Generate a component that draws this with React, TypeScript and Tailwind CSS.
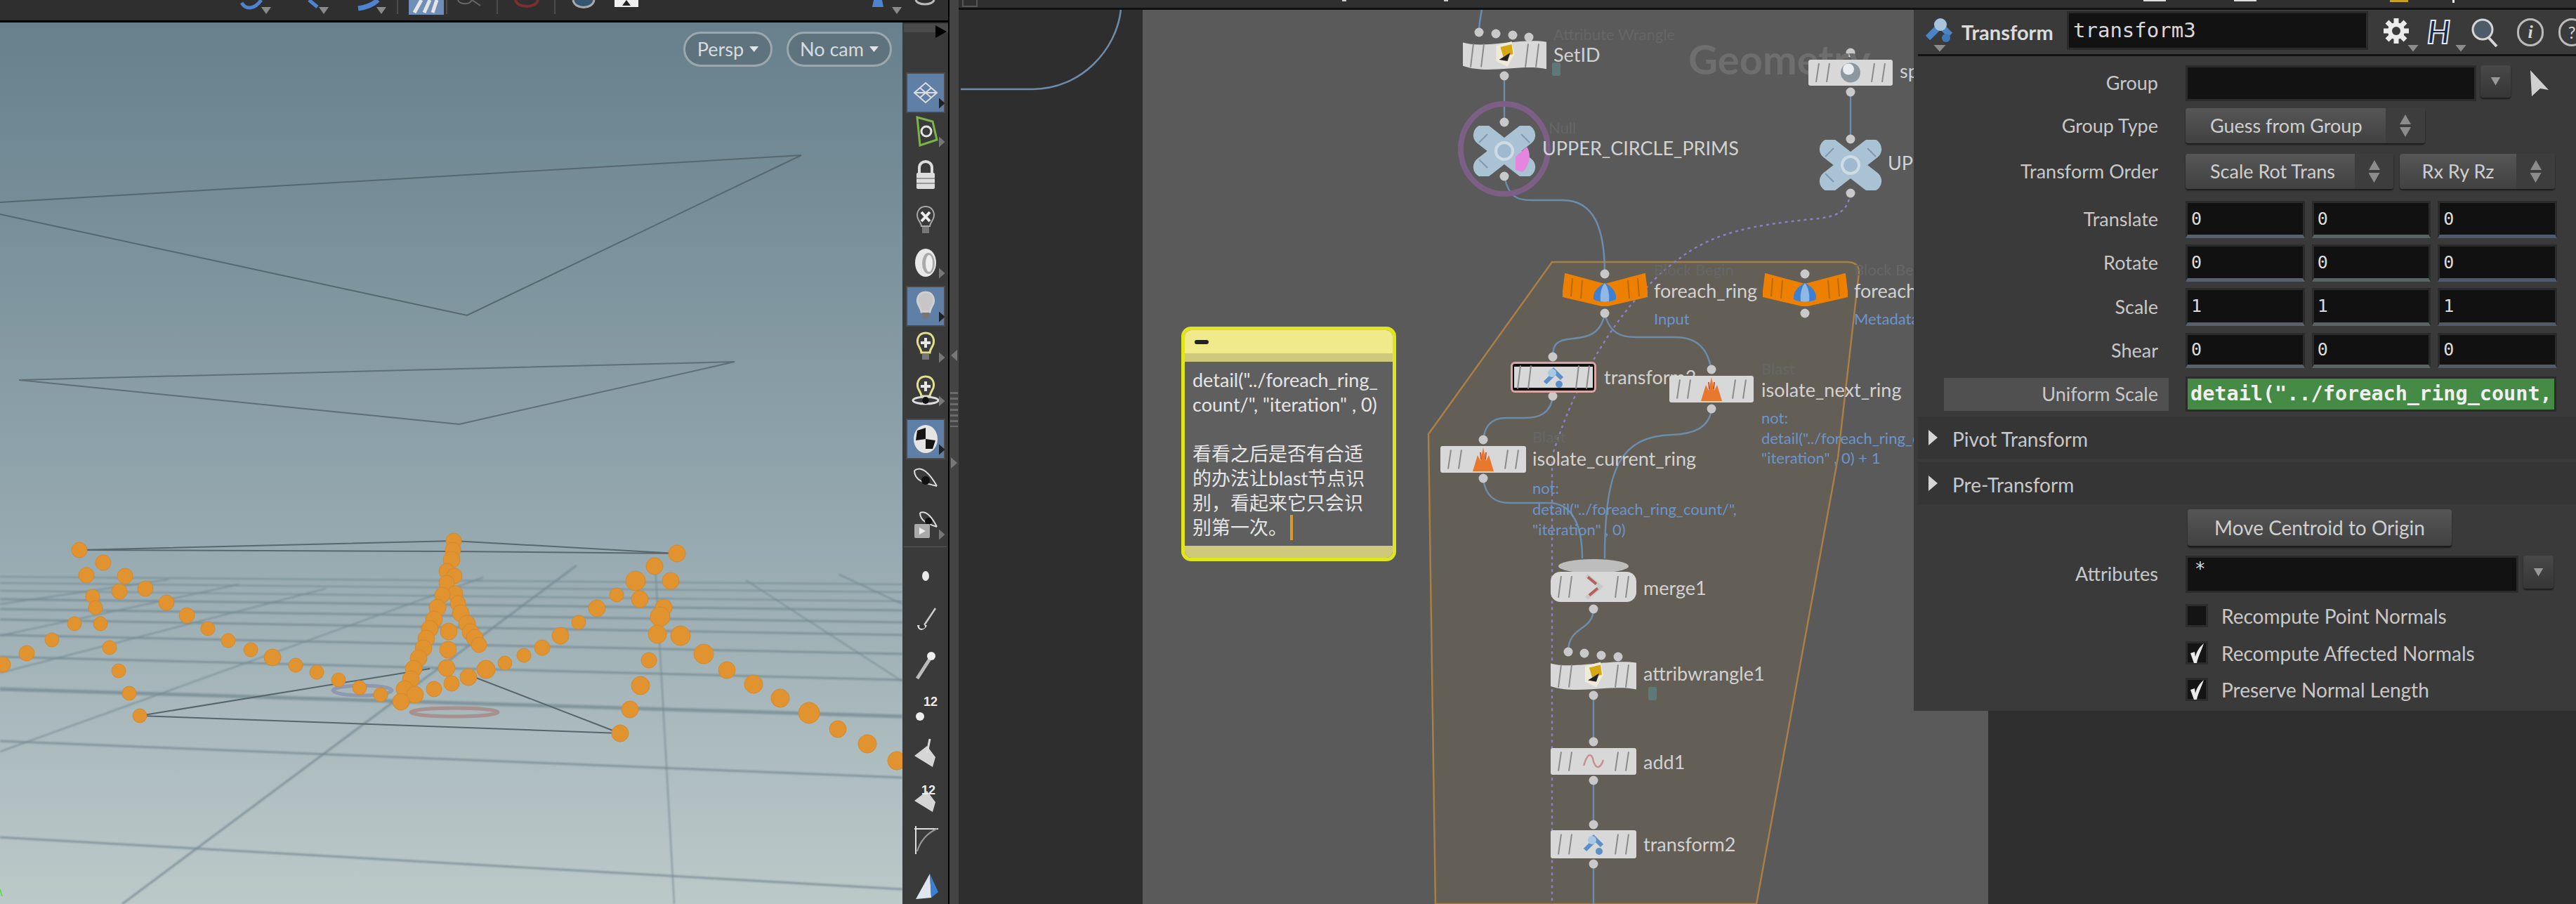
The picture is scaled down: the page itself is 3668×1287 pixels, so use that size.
import type { ReactNode } from "react";

const SANS = "font-['Lato','Noto_Sans_CJK_SC',sans-serif]";
const MONO = "font-['DejaVu_Sans_Mono',monospace]";
const OX = 1365; // right pane starts here, node data is in page coordinates

// viewport scatter, [x, y, r]
const dots: number[][] = [
  [113, 783, 11], [147, 801, 11], [123, 819, 11], [178, 820, 11], [207, 838, 11], [170, 842, 11], [132, 849, 10], [136, 865, 10],
  [237, 858, 11], [266, 876, 11], [106, 888, 10], [143, 888, 10], [296, 895, 10], [74, 911, 10], [325, 912, 10], [156, 922, 10],
  [357, 925, 10], [38, 930, 11], [388, 936, 12], [4, 946, 11], [421, 947, 10], [169, 955, 10], [451, 957, 10], [482, 968, 10],
  [184, 987, 10], [512, 979, 10], [542, 989, 10], [199, 1019, 10],
  [646, 770, 11], [645, 783, 11], [643, 797, 12], [636, 813, 11], [647, 820, 11], [636, 830, 11], [648, 845, 11], [630, 847, 11],
  [652, 859, 11], [623, 865, 12], [656, 873, 12], [618, 882, 12], [665, 888, 12], [612, 895, 12], [639, 899, 12], [670, 900, 12],
  [607, 909, 12], [676, 908, 12], [603, 923, 12], [682, 918, 11], [638, 925, 12], [596, 937, 12], [589, 952, 12], [636, 951, 12],
  [585, 967, 12], [576, 981, 12], [591, 989, 12], [571, 999, 12],
  [618, 981, 11], [643, 973, 11], [667, 964, 12], [692, 953, 13], [719, 944, 10], [746, 933, 10], [772, 922, 11], [798, 905, 12],
  [824, 886, 10], [850, 866, 12], [878, 847, 10], [905, 827, 14], [932, 806, 12], [964, 788, 12], [955, 827, 12], [911, 853, 12],
  [945, 865, 12], [940, 878, 14], [936, 903, 13], [969, 905, 14], [1002, 931, 14], [924, 940, 11], [1035, 954, 12], [912, 976, 13],
  [1073, 974, 13], [1111, 994, 13], [897, 1010, 12], [1152, 1015, 15], [883, 1044, 12], [1193, 1038, 12], [1235, 1059, 13], [1277, 1083, 13],
];

const groundLines: number[][] = [
  [0, 1192, 1285, 1266, 3], [0, 1055, 1285, 1107, 3], [0, 981, 1285, 1020, 5], [0, 935, 1285, 968, 3], [0, 904, 1285, 931, 3],
  [0, 882, 1285, 904, 3], [0, 867, 1285, 886, 3], [0, 853, 1285, 869, 3], [0, 841, 1285, 856, 2], [0, 830, 1285, 843, 2], [0, 821, 1285, 832, 2],
  [174, 1287, 821, 805, 3], [0, 1070, 688, 822, 2], [0, 958, 464, 838, 2], [0, 905, 340, 832, 2], [0, 860, 240, 825, 2],
  [960, 1287, 933, 805, 2], [1285, 970, 1062, 826, 2], [1285, 860, 1195, 818, 2],
];

function Triangle({ className }: { className: string }) {
  return <span className={`inline-block [clip-path:polygon(0_0,100%_0,50%_100%)] ${className}`} />;
}

function Viewport() {
  return (
    <div className="relative h-[1255px] w-[1285px] overflow-hidden bg-gradient-to-b from-[#67808c] via-[#8fa3ab] to-[#bcc9c9]">
      <svg className="absolute inset-0" width="1285" height="1255" viewBox="0 32 1285 1255" fill="none">
        <g className="blur-[0.8px]">
          {groundLines.map((l, i) => (
            <line key={i} x1={l[0]} y1={l[1]} x2={l[2]} y2={l[3]} stroke="#718690" strokeWidth={l[4]} opacity="0.7" />
          ))}
        </g>
        <path d="M0 288 L1141 221 L665 449 L0 305" stroke="#56686f" strokeWidth="2" />
        <path d="M27 541 L1046 515 L654 604 Z" stroke="#5f6f76" strokeWidth="2" />
        <path d="M113 783 L646 770 L964 788 L646 785 Z" stroke="#59686e" strokeWidth="2" />
        <path d="M199 1019 L612 952 M199 1019 L883 1044 L678 965" stroke="#56656b" strokeWidth="2" />
        <ellipse cx="516" cy="983" rx="42" ry="7" stroke="#8f98ac" strokeWidth="5" />
        <ellipse cx="647" cy="1014" rx="62" ry="6" stroke="#a8908f" strokeWidth="5" />
        {dots.map((d, i) => (
          <circle key={i} cx={d[0]} cy={d[1]} r={d[2]} fill="#e0932f" stroke="#d08a32" />
        ))}
        <path d="M0 1266 L3 1276" stroke="#5fdc4f" strokeWidth="2" />
      </svg>
      <div className={`absolute right-[15px] top-[13px] flex gap-[20px] text-[27px] text-[#d5dcdf] ${SANS}`}>
        <div className="flex h-[50px] w-[127px] items-center justify-center gap-2 rounded-full border-[3px] border-[#9ba8ae] bg-[#5f737e]">
          Persp <Triangle className="h-[8px] w-[13px] bg-[#e2e6e8]" />
        </div>
        <div className="flex h-[50px] w-[150px] items-center justify-center gap-2 rounded-full border-[3px] border-[#9ba8ae] bg-[#5f737e]">
          No cam <Triangle className="h-[8px] w-[13px] bg-[#e2e6e8]" />
        </div>
      </div>
    </div>
  );
}

function Bulb({ color = "#cfcfcf", dark, cross }: { color?: string; dark?: boolean; cross?: boolean }) {
  return (
    <>
      <path d="M20 4 C30 4 33 13 31 20 C29 25 26 28 26 32 L14 32 C14 28 11 25 9 20 C7 13 10 4 20 4 Z" fill={dark ? "#3d3d3d" : "#c6c6c6"} stroke={color} strokeWidth="3" />
      <rect x="15" y="33" width="10" height="9" fill="#777" />
      {cross && <path d="M20 11 V25 M13 18 H27" stroke={dark ? "#e8e8e8" : "#222"} strokeWidth="4" />}
    </>
  );
}

const toolIcons: ReactNode[] = [
  <path key="a" d="M20 10 L36 24 L20 38 L4 24 Z M12 17 L28 31 M28 17 L12 31 M4 24 H36" stroke="#ddd" strokeWidth="2" fill="none" />,
  <g key="b" fill="none"><path d="M8 4 L30 10 L36 36 L12 44 Z" stroke="#7ab548" strokeWidth="3" /><circle cx="21" cy="24" r="7" stroke="#e5e5e5" strokeWidth="3" /></g>,
  <g key="c"><path d="M11 22 V14 C11 2 29 2 29 14 V22" stroke="#ddd" strokeWidth="4" fill="none" /><rect x="7" y="21" width="26" height="23" rx="2" fill="#ddd" /><path d="M7 29 H33 M7 36 H33" stroke="#999" strokeWidth="2" /></g>,
  <g key="d"><path d="M20 4 C30 4 34 14 31 21 C29 26 26 28 26 32 L14 32 C14 28 11 26 9 21 C6 14 10 4 20 4 Z" fill="#3a3a3a" stroke="#aaa" strokeWidth="2" /><path d="M14 12 L26 25 M26 12 L14 25" stroke="#eee" strokeWidth="4" /><rect x="15" y="33" width="10" height="9" fill="#777" /></g>,
  <g key="e"><ellipse cx="20" cy="24" rx="15" ry="20" fill="#e8e8e8" /><ellipse cx="24" cy="25" rx="9" ry="15" fill="#aaa" /><ellipse cx="25" cy="25" rx="5" ry="12" fill="#eee" /></g>,
  <Bulb key="f" />,
  <Bulb key="g" color="#e3e08a" dark cross />,
  <g key="h"><Bulb color="#e3e08a" dark cross /><ellipse cx="20" cy="38" rx="18" ry="5" fill="none" stroke="#ddd" strokeWidth="3" /><circle cx="20" cy="38" r="5" fill="#111" /></g>,
  <g key="i"><ellipse cx="20" cy="24" rx="17" ry="20" fill="#e5e5e5" /><path d="M8 12 L20 8 L20 24 L6 26 Z M20 24 L34 26 L30 38 L20 38 Z" fill="#151515" /></g>,
  <g key="j" fill="none"><path d="M4 12 C14 4 26 16 36 34" stroke="#ddd" strokeWidth="2" /><path d="M4 12 C4 26 18 30 36 34" stroke="#ddd" strokeWidth="2" /><circle cx="20" cy="26" r="6" fill="#111" /></g>,
  <g key="k" fill="none"><path d="M12 8 C22 4 30 16 36 28 M12 8 C12 20 24 24 36 28" stroke="#ddd" strokeWidth="2" /><circle cx="24" cy="20" r="5" fill="#111" /><rect x="4" y="24" width="22" height="20" rx="2" fill="#aaa" /><path d="M11 29 L20 34 L11 39 Z" fill="#eee" /></g>,
];

const toolIcons2: ReactNode[] = [
  <ellipse key="a" cx="20" cy="24" rx="5" ry="7" fill="#e8e8e8" />,
  <g key="b"><path d="M34 6 L18 30" stroke="#ccc" strokeWidth="2.5" /><path d="M8 30 C10 42 20 36 22 30" fill="#ddd" /><ellipse cx="15" cy="32" rx="4" ry="3" fill="#333" /></g>,
  <g key="c"><path d="M8 44 L26 16" stroke="#bbb" strokeWidth="5" /><circle cx="28" cy="12" r="6" fill="#eee" /></g>,
  <g key="d"><circle cx="12" cy="36" r="6" fill="#eee" /><text x="17" y="21" fontSize="18" fontWeight="700" fill="#eee" fontFamily="Liberation Sans">12</text></g>,
  <g key="e"><path d="M4 28 L22 14 L34 30 L30 44 Z" fill="#d5d5d5" /><path d="M26 4 L22 24" stroke="#ddd" strokeWidth="3" /></g>,
  <g key="f"><path d="M4 28 L22 14 L34 30 L30 44 Z" fill="#d5d5d5" /><text x="14" y="19" fontSize="18" fontWeight="700" fill="#eee" fontFamily="Liberation Sans">12</text></g>,
  <g key="g" fill="none" stroke="#ddd" strokeWidth="2"><path d="M6 4 V44 M4 8 H38" /><path d="M8 40 C12 26 22 14 36 8" stroke="#999" /></g>,
  <g key="h"><path d="M6 44 L26 8 L28 42 Z" fill="#dfe6ee" /><path d="M26 8 L38 34 L28 42 Z" fill="#3d7fd0" /></g>,
];

const toolMargins = ["mt-0", "mt-[1px]", "mt-[8px]", "mt-[11px]", "mt-[6px]", "mt-[8px]", "mt-[4px]", "mt-[8px]", "mt-[15px]", "mt-[3px]", "mt-[10px]"];
const toolMargins2 = ["mt-[14px]", "mt-[10px]", "mt-[8px]", "mt-[8px]", "mt-[10px]", "mt-[10px]", "mt-[6px]", "mt-[10px]"];
const active = [0, 5, 8];
const hasMenu = [0, 1, 4, 5, 6, 7, 8, 10];

function ToolCell({ icon, className, on, more }: { icon: ReactNode; className: string; on?: boolean; more?: boolean }) {
  return (
    <div className={`relative flex h-[54px] w-[52px] shrink-0 items-center justify-center self-center ${on ? "bg-[#5f7fa6] outline outline-[2px] outline-[#4b4b4b]" : ""} ${className}`}>
      <svg width="40" height="48" viewBox="0 0 40 48">{icon}</svg>
      {more && <span className={`absolute -right-[2px] bottom-[4px] h-[16px] w-[9px] [clip-path:polygon(0_0,100%_50%,0_100%)] ${on ? "bg-[#222]" : "bg-[#777]"}`} />}
    </div>
  );
}

function Toolbar() {
  return (
    <div className="flex h-[1255px] w-[65px] flex-col overflow-hidden bg-[#3a3a3a]">
      <div className="relative ml-[2px] mt-[2px] mb-[59px] h-[22px] bg-[#4a4a4a]">
        <span className="absolute right-[2px] top-[2px] h-[18px] w-[16px] bg-black [clip-path:polygon(0_0,100%_50%,0_100%)]" />
      </div>
      {toolIcons.map((ic, i) => (
        <ToolCell key={i} icon={ic} className={toolMargins[i]} on={active.includes(i)} more={hasMenu.includes(i)} />
      ))}
      <div className="mx-[2px] mt-[5px] h-px shrink-0 bg-[#5a5a5a]" />
      {toolIcons2.map((ic, i) => (
        <ToolCell key={i} icon={ic} className={toolMargins2[i]} />
      ))}
    </div>
  );
}

function LeftTopBar() {
  return (
    <div className="h-[32px] border-b-[3px] border-black bg-[#2f2f2f]">
      <svg width="1350" height="29" viewBox="0 0 1350 29">
        <path d="M344 4 C350 14 362 14 372 0 M440 0 L452 10" stroke="#4f83cf" strokeWidth="5" fill="none" />
        <path d="M510 12 C524 10 532 6 538 0" stroke="#4f83cf" strokeWidth="7" fill="none" />
        <path d="M372 10 H386 L379 20 Z M454 10 H468 L461 20 Z M536 10 H550 L543 20 Z M1270 10 H1284 L1277 20 Z" fill="#8a8a8a" />
        <rect x="582" y="0" width="50" height="21" fill="#6f8fb8" />
        <path d="M590 18 L600 0 M604 18 L612 0 M616 18 L622 0" stroke="#e5e5e5" strokeWidth="5" />
        <path d="M566 0 V20 M636 0 V20 M708 0 V20 M790 0 V20" stroke="#4c4c4c" strokeWidth="2" />
        <path d="M652 0 C654 6 668 8 672 0 L684 8" stroke="#666" strokeWidth="2" fill="none" />
        <path d="M734 0 C736 12 764 12 766 0" stroke="#7b2f2f" strokeWidth="4" fill="none" />
        <path d="M816 0 C818 14 844 14 846 0" stroke="#aaa" fill="#35566e" strokeWidth="3" />
        <rect x="875" y="0" width="34" height="10" fill="#f0f0f0" />
        <path d="M886 8 L892 0 L898 8" fill="#222" />
        <path d="M1244 0 H1256 L1258 10 H1242 Z" fill="#4f83cf" />
        <path d="M1304 0 C1306 8 1328 8 1330 0" stroke="#bbb" strokeWidth="3" fill="none" />
      </svg>
    </div>
  );
}

function Stripes({ w, h, color = "#8a8a8a" }: { w: number; h: number; color?: string }) {
  const xs = [13, 28, w - 28, w - 13];
  return (
    <>
      {xs.map((x, i) => (
        <path key={i} d={`M${x + 2} ${h * 0.14} L${x - 2} ${h * 0.86}`} stroke={color} strokeWidth="2" />
      ))}
    </>
  );
}

function NodeIcon({ kind, cx, cy }: { kind: string; cx: number; cy: number }) {
  return (
    <g transform={`translate(${cx} ${cy})`}>
      {kind === "wrangle" && (
        <>
          <path d="M-12 -14 L10 -20 L14 -2 L4 16 L-12 8 Z" fill="#f0ead8" />
          <path d="M-6 -12 L10 -16 L12 -2 L-2 2 Z" fill="#d6a911" />
          <path d="M-8 6 L8 -4 L4 8 Z" fill="#222" />
        </>
      )}
      {kind === "transform" && (
        <>
          <path d="M-12 8 L2 -6 M-2 -12 L12 2" stroke="#5a8fc8" strokeWidth="6" />
          <circle cx="-2" cy="-6" r="6" fill="#a8c8e4" />
          <circle cx="8" cy="10" r="5" fill="#5a8fc8" />
        </>
      )}
      {kind === "blast" && (
        <>
          <path d="M-15 17 L-8 -6 L-4 2 L0 -17 L4 2 L8 -6 L15 17 Z" fill="#e8792c" />
          <path d="M-4 -10 L-3 0 M4 -10 L3 0" stroke="#c9552a" strokeWidth="2" />
        </>
      )}
      {kind === "merge" && (
        <>
          <path d="M-10 -16 L10 0 L-10 16" stroke="#c9c9c9" strokeWidth="6" fill="none" />
          <path d="M-8 -14 L4 -4 M-6 12 L6 2" stroke="#b5605a" strokeWidth="4" />
        </>
      )}
      {kind === "add" && <path d="M-14 6 C-8 -14 -2 -12 0 0 C4 12 10 10 14 -2" stroke="#c89090" strokeWidth="2.5" fill="none" />}
      {kind === "sphere" && (
        <>
          <circle r="14" fill="#8c979f" />
          <circle cx="-3" cy="-5" r="8" fill="#e8edf0" />
        </>
      )}
    </g>
  );
}

type NodeData = { x: number; y: number; w: number; h: number; kind: string; shape?: string; selected?: boolean };

const nodes: NodeData[] = [
  { x: 2083, y: 56, w: 119, h: 46, kind: "wrangle", shape: "wave" },
  { x: 2575, y: 85, w: 120, h: 37, kind: "sphere" },
  { x: 2150, y: 514, w: 124, h: 46, kind: "transform", selected: true },
  { x: 2377, y: 535, w: 120, h: 38, kind: "blast" },
  { x: 2051, y: 635, w: 122, h: 38, kind: "blast" },
  { x: 2208, y: 814, w: 122, h: 43, kind: "merge", shape: "round" },
  { x: 2208, y: 940, w: 122, h: 45, kind: "wrangle", shape: "wave" },
  { x: 2208, y: 1065, w: 122, h: 38, kind: "add" },
  { x: 2208, y: 1182, w: 122, h: 40, kind: "transform" },
];

function BoxNode({ n }: { n: NodeData }) {
  const { w, h } = n;
  return (
    <svg className="absolute" width={w} height={h} style={{ left: n.x - OX, top: n.y }} viewBox={`0 0 ${w} ${h}`}>
      {n.shape === "wave" ? (
        <path d={`M0 ${h * 0.1} C${w * 0.25} ${h * 0.3} ${w * 0.7} ${-h * 0.05} ${w} ${h * 0.08} V${h * 0.92} C${w * 0.7} ${h * 0.75} ${w * 0.3} ${h * 1.1} 0 ${h * 0.82} Z`} fill="#d8d8d8" />
      ) : n.selected ? (
        <>
          <rect x="1" y="1" width={w - 2} height={h - 2} rx="6" fill="#d9a6a6" />
          <rect x="4" y="4" width={w - 8} height={h - 8} rx="3" fill="#111" />
          <rect x="6" y="8" width={w - 12} height={h - 16} fill="#d8d8d8" />
        </>
      ) : (
        <rect width={w} height={h} rx={n.shape === "round" ? 14 : 3} fill="#d8d8d8" />
      )}
      <Stripes w={w} h={h} />
      <NodeIcon kind={n.kind} cx={w / 2} cy={h / 2} />
    </svg>
  );
}

function BlockNode({ x }: { x: number }) {
  return (
    <svg className="absolute" width="121" height="47" style={{ left: x - OX, top: 389 }} viewBox="0 0 121 47">
      <path d="M4 1 L60 16 L117 1 L121 33 L60 47 L0 33 Z" fill="#ee8000" stroke="#ee8000" strokeLinejoin="round" strokeWidth="2" />
      <path d="M14 7 L12 33 M28 10 L26 36 M93 10 L95 36 M107 7 L109 33" stroke="#b96a0a" strokeWidth="2" />
      <path d="M60 14 C72 20 77 28 76 37 C68 42 52 42 44 37 C43 28 48 20 60 14 Z" fill="#3d7fd0" />
      <path d="M60 14 C65 20 67 30 66 40 C62 41 58 41 54 40 C53 30 55 20 60 14 Z" fill="#8fb8e6" />
    </svg>
  );
}

function NullNode({ cx, cy, pink }: { cx: number; cy: number; pink?: boolean }) {
  return (
    <svg className="absolute" width="90" height="72" style={{ left: cx - 45 - OX, top: cy - 36 }} viewBox="-45 -36 90 72">
      <g fill="#a9c2d4">
        <rect x="-52" y="-15" width="104" height="30" rx="15" transform="rotate(38)" />
        <rect x="-52" y="-15" width="104" height="30" rx="15" transform="rotate(-38)" />
      </g>
      <path d="M-36 -12 L-24 -24 M-24 24 L-36 12 M36 -12 L24 -24" stroke="#7f99ad" strokeWidth="2" />
      {pink && <path d="M16 8 L32 -6 C39 4 36 20 26 30 L16 27 Z" fill="#e585de" />}
      <circle r="12" fill="#9dbad0" stroke="#cfdbe3" strokeWidth="4" />
    </svg>
  );
}

function Label({ x, y, children, tone = "main" }: { x: number; y: number; children: ReactNode; tone?: "main" | "faint" | "blue" }) {
  const toneClass =
    tone === "main" ? "text-[27px] text-[#d2d2d2]" : tone === "faint" ? "text-[22px] text-[#666]" : "text-[22px] text-[#6b95cc]";
  return (
    <div className={`absolute -translate-y-1/2 whitespace-nowrap leading-none ${toneClass}`} style={{ left: x - OX, top: y }}>
      {children}
    </div>
  );
}

const inputDots = [
  [2142, 108], [2106, 46], [2130, 48], [2154, 50], [2177, 53], [2635, 75], [2635, 131], [2142, 174], [2142, 251], [2635, 198], [2635, 275],
  [2285, 390], [2285, 446], [2570, 390], [2570, 446], [2211, 508], [2211, 564], [2437, 526], [2437, 582], [2112, 626], [2112, 681],
  [2269, 867], [2233, 928], [2256, 930], [2280, 933], [2304, 935], [2269, 990], [2269, 1056], [2269, 1111], [2269, 1174], [2269, 1230],
];

const wires = [
  "M1368 127 L1470 127 C1540 127 1590 70 1596 14",
  "M2106 46 C2106 34 2108 24 2110 14",
  "M2142 108 V174",
  "M2635 131 V198",
  "M2142 251 C2148 280 2160 285 2180 285 L2225 285 C2270 285 2285 325 2285 390",
  "M2285 446 C2280 475 2262 480 2240 482 C2216 484 2211 490 2211 508",
  "M2285 446 C2292 476 2310 480 2330 480 L2385 480 C2420 480 2432 500 2437 526",
  "M2211 564 C2208 590 2190 595 2170 595 L2145 595 C2120 595 2114 610 2112 626",
  "M2112 681 C2115 708 2130 716 2150 716 L2205 716 C2240 716 2253 750 2253 795",
  "M2437 582 C2434 610 2410 618 2380 619 C2310 622 2285 660 2285 795",
  "M2269 867 C2268 900 2233 890 2233 928",
  "M2269 990 V1056",
  "M2269 1111 V1174",
  "M2269 1230 V1287",
];

function Network() {
  return (
    <>
      <svg className="absolute left-0 top-[0px]" width="2303" height="1287" viewBox={`${OX} 0 2303 1287`} fill="none">
        <path d="M2210 373 L2630 373 Q2647 373 2647 388 L2617 652 L2501 1287 L2044 1287 L2034 618 Z" fill="#635e56" stroke="#a97f45" strokeWidth="2.5" />
        {wires.map((d) => (
          <path key={d} d={d} stroke="#6c8cab" strokeWidth="2.5" />
        ))}
        <path d="M2635 275 C2630 305 2612 309 2580 312 C2500 320 2440 330 2390 369 C2320 420 2250 520 2210 650 V1287" stroke="#8a7fc0" strokeWidth="2.5" strokeDasharray="4 5" />
        <ellipse cx="2142" cy="212" rx="62" ry="64" stroke="#7d5f85" strokeWidth="8" />
        <ellipse cx="2269" cy="806" rx="50" ry="10" fill="#bdbdbd" />
        {inputDots.map((d) => (
          <circle key={`${d[0]}-${d[1]}`} cx={d[0]} cy={d[1]} r="6.5" fill="#c9c9c9" />
        ))}
        <rect x="2347" y="978" width="12" height="19" rx="2" fill="#5f7878" />
        <rect x="2210" y="89" width="12" height="19" rx="2" fill="#5f7878" />
      </svg>

      <div className="absolute left-[1039px] top-[55px] text-[58px] font-bold leading-none text-[#6e6e6e]">Geometry</div>

      <Label x={2212} y={49} tone="faint">Attribute Wrangle</Label>
      <Label x={2212} y={77}>SetID</Label>
      <Label x={2705} y={100}>sphere1</Label>
      <Label x={2205} y={182} tone="faint">Null</Label>
      <Label x={2196} y={210}>UPPER_CIRCLE_PRIMS</Label>
      <Label x={2688} y={231}>UPPER</Label>
      <Label x={2355} y={384} tone="faint">Block Begin</Label>
      <Label x={2640} y={384} tone="faint">Block Begin</Label>
      <Label x={2355} y={413}>foreach_ring</Label>
      <Label x={2640} y={413}>foreach_ring</Label>
      <Label x={2355} y={454} tone="blue">Input</Label>
      <Label x={2640} y={454} tone="blue">Metadata</Label>
      <Label x={2284} y={536}>transform3</Label>
      <Label x={2508} y={525} tone="faint">Blast</Label>
      <Label x={2508} y={554}>isolate_next_ring</Label>
      <Label x={2508} y={595} tone="blue">not:</Label>
      <Label x={2508} y={624} tone="blue">detail("../foreach_ring_count/",</Label>
      <Label x={2508} y={652} tone="blue">"iteration" , 0) + 1</Label>
      <Label x={2182} y={622} tone="faint">Blast</Label>
      <Label x={2182} y={652}>isolate_current_ring</Label>
      <Label x={2182} y={695} tone="blue">not:</Label>
      <Label x={2182} y={725} tone="blue">detail("../foreach_ring_count/",</Label>
      <Label x={2182} y={754} tone="blue">"iteration" , 0)</Label>
      <Label x={2340} y={836}>merge1</Label>
      <Label x={2340} y={958}>attribwrangle1</Label>
      <Label x={2340} y={1084}>add1</Label>
      <Label x={2340} y={1201}>transform2</Label>

      {nodes.map((n) => (
        <BoxNode key={`${n.x}-${n.y}`} n={n} />
      ))}
      <BlockNode x={2225} />
      <BlockNode x={2510} />
      <NullNode cx={2142} cy={215} pink />
      <NullNode cx={2635} cy={235} />
    </>
  );
}

function StickyNote() {
  return (
    <div className="absolute left-[317px] top-[465px] flex h-[334px] w-[306px] flex-col overflow-hidden rounded-[14px] border-[5px] border-[#dfe61e] bg-[#5f5f5f]">
      <div className="flex h-[33px] shrink-0 items-center bg-[#f0ea8a] pl-[14px]">
        <span className="h-[6px] w-[20px] rounded-sm bg-[#222]" />
      </div>
      <div className="h-[12px] shrink-0 bg-[#cfca7b]" />
      <div className="flex-1 whitespace-pre pl-[11px] pt-[8px] text-[27px] leading-[35px] text-[#e6e6e6]">
        <div>detail("../foreach_ring_</div>
        <div>count/", "iteration" , 0)</div>
        <div className="h-[35px]" />
        <div>看看之后是否有合适</div>
        <div>的办法让blast节点识</div>
        <div>别，看起来它只会识</div>
        <div className="flex h-[35px] items-center">
          别第一次。
          <span className="ml-[4px] h-[36px] w-[4px] bg-[#d59a2a]" />
        </div>
      </div>
      <div className="h-[17px] shrink-0 bg-[#cfca7b]" />
    </div>
  );
}

function RowLabel({ children, className = "" }: { children: ReactNode; className?: string }) {
  return <div className={`w-[348px] shrink-0 text-right text-[27px] text-[#c8c8c8] ${className}`}>{children}</div>;
}

function TextField({ className, children }: { className: string; children?: ReactNode }) {
  return <div className={`border-[3px] border-[#2b2b2b] bg-[#121212] pl-[10px] text-[26px] leading-[32px] text-[#d8d8d8] ${MONO} ${className}`}>{children}</div>;
}

function DropButton({ className }: { className: string }) {
  return (
    <div className={`flex items-center justify-center rounded-sm bg-gradient-to-b from-[#484848] to-[#363636] shadow-[0_2px_2px_#1a1a1a] ${className}`}>
      <Triangle className="h-[12px] w-[14px] bg-[#999]" />
    </div>
  );
}

function MenuButton({ label, w, arrow, center }: { label: string; w: string; arrow: string; center?: boolean }) {
  return (
    <div className={`flex h-[50px] overflow-hidden rounded-sm bg-gradient-to-b from-[#565656] to-[#414141] text-[27px] text-[#cfcfcf] shadow-[0_2px_2px_#1a1a1a] ${w}`}>
      <div className={`flex flex-1 items-center ${center ? "justify-center" : "pl-[35px]"}`}>{label}</div>
      <div className={`flex flex-col items-center justify-center gap-[4px] bg-[#3d3d3d] ${arrow}`}>
        <Triangle className="h-[14px] w-[16px] rotate-180 bg-[#8c8c8c]" />
        <Triangle className="h-[14px] w-[16px] bg-[#8c8c8c]" />
      </div>
    </div>
  );
}

function NumberRow({ label, value, className, h }: { label: string; value: string; className: string; h: string }) {
  const bars = ["border-b-[#59606b]", "border-b-[#566464]", "border-b-[#4f5a6a]"];
  return (
    <div className={`flex items-center ${className} ${h}`}>
      <RowLabel>{label}</RowLabel>
      <div className="ml-[39px] flex h-full w-[529px] gap-[10px]">
        {bars.map((b) => (
          <div key={b} className={`flex flex-1 items-center border-[3px] border-[#2b2b2b] bg-[#111] pl-[5px] text-[25px] text-[#dcdcdc] ${MONO} !border-b-[5px] ${b}`}>
            {value}
          </div>
        ))}
      </div>
    </div>
  );
}

function Section({ label, className }: { label: string; className: string }) {
  return (
    <div className={`ml-[6px] flex h-[60px] items-center bg-[#353535] pl-[15px] text-[28px] text-[#c8c8c8] ${className}`}>
      <span className="h-[22px] w-[13px] bg-[#d5d5d5] [clip-path:polygon(0_0,100%_50%,0_100%)]" />
      <span className="ml-[21px] pt-[3px]">{label}</span>
    </div>
  );
}

function CheckRow({ label, checked, className }: { label: string; checked?: boolean; className: string }) {
  return (
    <div className={`flex h-[33px] items-center pl-[387px] text-[28px] text-[#c8c8c8] ${className}`}>
      <div className="flex h-[33px] w-[32px] items-center justify-center border-[3px] border-[#2c2c2c] bg-[#141414]">
        {checked && (
          <svg width="24" height="30" viewBox="0 0 24 30">
            <path d="M3 15 L9 13 L10 20 C12 12 16 6 22 1 C19 10 14 20 12 29 L8 29 Z" fill="#eaeaea" />
          </svg>
        )}
      </div>
      <span className="ml-[19px]">{label}</span>
    </div>
  );
}

function HeaderIcons() {
  return (
    <div className="ml-[18px] flex items-center">
      <div className="relative h-[48px] w-[62px]">
        <svg width="44" height="44" viewBox="0 0 44 44">
          <path d="M22 4 V40 M4 22 H40 M9 9 L35 35 M35 9 L9 35" stroke="#ececec" strokeWidth="7" />
          <circle cx="22" cy="22" r="12" fill="#ececec" />
          <circle cx="22" cy="22" r="6" fill="#3a3a3a" />
        </svg>
        <Triangle className="absolute bottom-[-4px] right-[8px] h-[10px] w-[16px] bg-[#8c8c8c]" />
      </div>
      <div className="relative h-[48px] w-[64px] pl-[4px] text-[46px] font-bold italic leading-[46px] text-[#10294d] [-webkit-text-stroke:2px_#e8e8e8]">
        H
        <Triangle className="absolute bottom-[-4px] right-[4px] h-[10px] w-[16px] bg-[#8c8c8c]" />
      </div>
      <svg className="ml-[2px]" width="42" height="44" viewBox="0 0 42 44" fill="none">
        <circle cx="17" cy="18" r="14" fill="#4d5c68" stroke="#d5d5d5" strokeWidth="3" />
        <path d="M26 30 L37 42" stroke="#d5d5d5" strokeWidth="4" />
      </svg>
      <div className="ml-[24px] flex h-[40px] w-[38px] items-center justify-center rounded-full border-[3px] border-[#bbb] font-['Liberation_Serif',serif] text-[26px] font-bold italic text-[#d5d5d5]">
        i
      </div>
      <div className="ml-[21px] flex h-[40px] w-[38px] shrink-0 items-center justify-center rounded-full border-[3px] border-[#bbb] text-[24px] text-[#d5d5d5]">?</div>
    </div>
  );
}

function ParamPanel() {
  return (
    <div className={`absolute left-[1360px] top-[14px] flex h-[998px] w-[943px] flex-col overflow-hidden bg-[#3a3a3a] ${SANS}`}>
      <div className="ml-[6px] flex h-[66px] shrink-0 items-center border-b-[3px] border-[#111]">
        <div className="relative ml-[8px] h-[44px] w-[48px] shrink-0">
          <svg width="44" height="40" viewBox="0 0 44 40">
            <path d="M6 30 L22 14 M18 6 L38 26" stroke="#4a84c4" strokeWidth="9" />
            <circle cx="24" cy="11" r="9" fill="#a8c4dc" />
            <circle cx="32" cy="30" r="6" fill="#3f78b8" />
          </svg>
          <Triangle className="absolute bottom-[-6px] left-[14px] h-[10px] w-[18px] bg-[#8c8c8c]" />
        </div>
        <div className="ml-[6px] w-[150px] shrink-0 text-[29px] font-bold text-[#dcdcdc]">Transform</div>
        <div className={`-mt-[4px] flex h-[55px] w-[429px] shrink-0 items-center border-[3px] border-[#2a2a2a] bg-[#121212] pl-[6px] text-[29px] text-[#d8d8d8] ${MONO}`}>
          transform3
        </div>
        <HeaderIcons />
      </div>

      <div className="mt-[13px] flex h-[51px] shrink-0 items-center">
        <RowLabel>Group</RowLabel>
        <TextField className="ml-[39px] h-full w-[414px]" />
        <DropButton className="-mt-[6px] ml-[6px] h-[46px] w-[43px]" />
        <svg className="ml-[26px]" width="30" height="38" viewBox="0 0 30 38">
          <path d="M2 0 L28 28 L16 26 L4 37 Z" fill="#d0d0d0" />
        </svg>
      </div>
      <div className="mt-[10px] flex h-[50px] shrink-0 items-center">
        <RowLabel>Group Type</RowLabel>
        <div className="ml-[39px]">
          <MenuButton label="Guess from Group" w="w-[341px]" arrow="w-[56px]" />
        </div>
      </div>
      <div className="mt-[15px] flex h-[50px] shrink-0 items-center">
        <RowLabel>Transform Order</RowLabel>
        <div className="ml-[39px] flex gap-[9px]">
          <MenuButton label="Scale Rot Trans" w="w-[296px]" arrow="w-[55px]" />
          <MenuButton label="Rx Ry Rz" w="w-[221px]" arrow="w-[55px]" center />
        </div>
      </div>
      <NumberRow label="Translate" value="0" className="mt-[17px] shrink-0" h="h-[53px]" />
      <NumberRow label="Rotate" value="0" className="mt-[9px] shrink-0" h="h-[53px]" />
      <NumberRow label="Scale" value="1" className="mt-[9px] shrink-0" h="h-[54px]" />
      <NumberRow label="Shear" value="0" className="mt-[10px] shrink-0" h="h-[50px]" />

      <div className="mt-[12px] flex h-[50px] shrink-0 items-center">
        <div className="ml-[43px] flex h-[47px] w-[320px] items-center justify-end bg-[#505050] pr-[15px] text-[27px] text-[#c8c8c8]">Uniform Scale</div>
        <div className={`ml-[24px] flex h-full w-[528px] items-center overflow-hidden whitespace-nowrap border-[3px] border-[#2b2b2b] bg-[#458a45] pl-[4px] text-[28.5px] font-bold text-[#f0f0f0] ${MONO}`}>
          detail("../foreach_ring_count,
        </div>
      </div>

      <Section label="Pivot Transform" className="mt-[7px] shrink-0" />
      <Section label="Pre-Transform" className="mt-[5px] shrink-0" />

      <div className="ml-[390px] mt-[7px] flex h-[52px] w-[376px] shrink-0 items-center justify-center rounded-sm bg-gradient-to-b from-[#565656] to-[#414141] text-[28px] text-[#cfcfcf] shadow-[0_3px_2px_#1a1a1a]">
        Move Centroid to Origin
      </div>

      <div className="mt-[14px] flex h-[53px] shrink-0 items-start">
        <RowLabel className="self-center">Attributes</RowLabel>
        <TextField className="ml-[39px] h-full w-[474px]">*</TextField>
        <DropButton className="ml-[7px] h-[47px] w-[43px]" />
      </div>

      <CheckRow label="Recompute Point Normals" className="mt-[16px] shrink-0" />
      <CheckRow label="Recompute Affected Normals" checked className="mt-[20px] shrink-0" />
      <CheckRow label="Preserve Normal Length" checked className="mt-[19px] shrink-0" />
    </div>
  );
}

function RightTopBar() {
  return (
    <div className="relative h-[14px] shrink-0 border-b-[3px] border-[#111] bg-[#2f2f2f]">
      <span className="absolute left-[5px] top-0 h-[10px] w-[22px] border-x-2 border-b-2 border-[#555]" />
      <span className="absolute left-[546px] top-0 h-[2px] w-[6px] bg-[#ccc]" />
      <span className="absolute left-[691px] top-0 h-[2px] w-[6px] bg-[#ccc]" />
      <span className="absolute left-[1687px] top-0 h-[2px] w-[32px] bg-[#ddd]" />
      <span className="absolute left-[1816px] top-0 h-[2px] w-[32px] bg-[#ddd]" />
      <span className="absolute left-[2038px] top-0 h-[3px] w-[26px] bg-[#caa01f]" />
      <span className="absolute left-[2127px] top-0 h-[4px] w-[3px] bg-[#eee]" />
    </div>
  );
}

export default function App() {
  return (
    <div className={`flex h-[1287px] w-[3668px] overflow-hidden bg-[#2f2f2f] ${SANS}`}>
      <div className="w-[1350px] shrink-0">
        <LeftTopBar />
        <div className="flex">
          <Viewport />
          <Toolbar />
        </div>
      </div>
      <div className="w-[2px] shrink-0 bg-black" />
      <div className="relative flex w-[13px] shrink-0 flex-col items-center bg-[#444]">
        <span className="absolute left-[2px] top-[498px] h-[16px] w-[9px] bg-[#777] [clip-path:polygon(100%_0,0_50%,100%_100%)]" />
        <span className="absolute left-[1px] top-[558px] h-[50px] w-[11px] bg-[repeating-linear-gradient(#6a6a6a_0_3px,transparent_3px_8px)]" />
        <span className="absolute left-[2px] top-[651px] h-[16px] w-[9px] bg-[#777] [clip-path:polygon(0_0,100%_50%,0_100%)]" />
      </div>
      <div className="relative flex w-[2303px] flex-col overflow-hidden">
        <RightTopBar />
        <div className="flex flex-1">
          <div className="w-[262px] bg-[#2e2e2e]" />
          <div className="w-[1204px] bg-[#5a5a5a]" />
          <div className="flex-1 bg-[#2f2f2f]" />
        </div>
        <Network />
        <StickyNote />
        <ParamPanel />
      </div>
    </div>
  );
}
